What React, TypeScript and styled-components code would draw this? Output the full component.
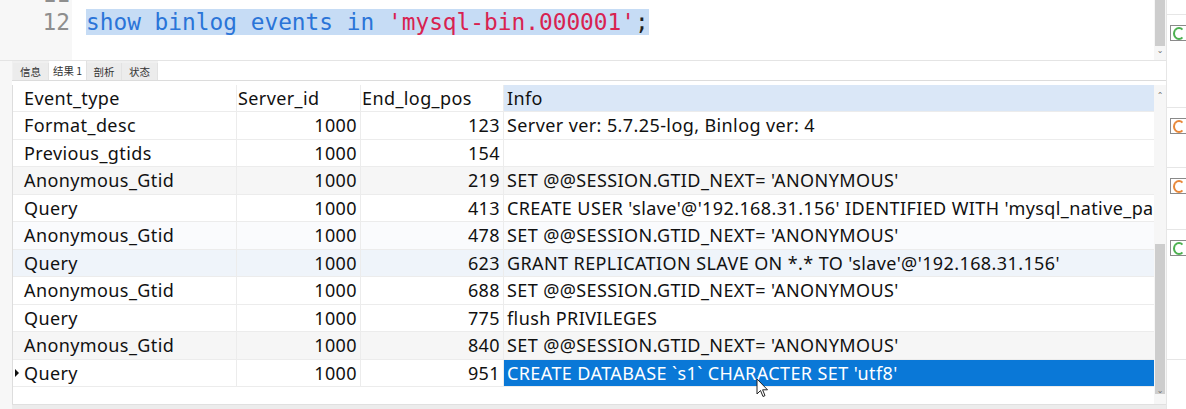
import React from "react";
import styled, { createGlobalStyle } from "styled-components";

const Global = createGlobalStyle`
  html, body { margin: 0; padding: 0; background: #ffffff; }
  body { width: 1186px; height: 409px; overflow: hidden; }
  * { box-sizing: border-box; }
`;

const Page = styled.div`
  width: 1186px;
  height: 409px;
  display: flex;
  overflow: hidden;
  position: relative;
  background: #ffffff;
`;

const Main = styled.div`
  width: 1167px;
  flex-shrink: 0;
  display: flex;
  flex-direction: column;
  border-right: 1px solid #e6e6e6;
`;

const Editor = styled.div`
  height: 61px;
  display: flex;
  border-bottom: 1px solid #e4e4e4;
  overflow: hidden;
`;

const Gutter = styled.div`
  width: 72px;
  background: #f7f7f7;
  display: flex;
  flex-direction: column;
  align-items: flex-end;
  padding-right: 2px;
  margin-top: -20px;
`;

const Code = styled.div`
  flex: 1;
  display: flex;
  flex-direction: column;
  padding-left: 14px;
  margin-top: -20px;
`;

const Line = styled.div`
  height: 28px;
  line-height: 28px;
  font-family: "DejaVu Sans Mono", monospace;
  font-size: 22.8px;
  white-space: pre;
  color: #222;
`;

const LineNo = styled(Line)`
  color: #8e8e8e;
`;

const Sel = styled.span`
  background: #c6dcf5;
`;

const Kw = styled.span`
  color: #2a74d8;
`;

const Str = styled.span`
  color: #d82250;
`;

const VScroll = styled.div<{ $thumbTop: number; $thumbH: number }>`
  width: 12px;
  position: relative;
  background: #f6f6f6;
  &::before {
    content: "";
    position: absolute;
    left: 1px;
    right: 1px;
    top: ${(p) => p.$thumbTop}px;
    height: ${(p) => p.$thumbH}px;
    background: #cdcdcd;
  }
`;

const Arrow = styled.span<{ $top?: number; $bottom?: number }>`
  position: absolute;
  left: 0;
  width: 12px;
  text-align: center;
  font-family: "DejaVu Sans", sans-serif;
  font-size: 8px;
  line-height: 10px;
  color: #707070;
  ${(p) => (p.$top !== undefined ? `top: ${p.$top}px;` : "")}
  ${(p) => (p.$bottom !== undefined ? `bottom: ${p.$bottom}px;` : "")}
`;

const Results = styled.div`
  flex: 1;
  display: flex;
  min-height: 0;
`;

const LeftMargin = styled.div`
  width: 12px;
  background: #f7f7f7;
`;

const ResultsBody = styled.div`
  flex: 1;
  display: flex;
  flex-direction: column;
  min-width: 0;
`;

const TabBar = styled.div`
  height: 20px;
  display: flex;
  align-items: stretch;
  border-bottom: 1px solid #dcdcdc;
  background: #ffffff;
`;

const TabStrip = styled.div`
  display: flex;
  background: #f0f0f0;
  padding-left: 1px;
  width: 146px;
`;

const Tab = styled.div<{ $active?: boolean; $w: number }>`
  width: ${(p) => p.$w}px;
  display: flex;
  align-items: center;
  justify-content: center;
  font-family: "Noto Sans CJK SC", "Noto Sans", sans-serif;
  font-size: 10.5px;
  color: #333;
  background: ${(p) => (p.$active ? "#ffffff" : "#ececec")};
  border-right: 1px solid #e2e2e2;
  margin-top: ${(p) => (p.$active ? "0" : "2px")};
`;

const GridWrap = styled.div`
  flex: 1;
  display: flex;
  min-height: 0;
  padding-top: 4px;
  position: relative;
`;

const Table = styled.div`
  flex: 1;
  min-width: 0;
  display: grid;
  grid-template-columns: 10px 214px 124px 143px 1fr;
  grid-auto-rows: 27.5px;
  grid-template-rows: 27px;
  align-content: start;
  border-left: 1px solid #dddddd;
  overflow: hidden;
`;

const Cell = styled.div<{ $right?: boolean; $bg?: string; $sel?: boolean }>`
  font-family: "Noto Sans", "Open Sans", sans-serif;
  font-size: 18px;
  letter-spacing: 0.4px;
  line-height: 27px;
  color: ${(p) => (p.$sel ? "#ffffff" : "#111111")};
  background: ${(p) => (p.$sel ? "#0a78d7" : p.$bg || "transparent")};
  white-space: nowrap;
  overflow: hidden;
  text-align: ${(p) => (p.$right ? "right" : "left")};
  padding: ${(p) => (p.$right ? "0 3px 0 0" : "0 0 0 1px")};
  border-right: 1px solid #ececec;
  border-bottom: 1px solid #ececec;
`;

const InfoCell = styled(Cell)`
  border-right: none;
  padding-left: 3px;
`;

const Indicator = styled.div<{ $bg?: string }>`
  background: ${(p) => p.$bg || "transparent"};
  border-bottom: 1px solid #ececec;
  display: flex;
  align-items: center;
  justify-content: center;
`;

const Tri = styled.span`
  width: 0;
  height: 0;
  border-top: 4px solid transparent;
  border-bottom: 4px solid transparent;
  border-left: 4px solid #111;
  margin-left: -2px;
`;

const HScroll = styled.div`
  height: 5px;
  background: #ececec;
  border-top: 1px solid #e0e0e0;
  margin-top: auto;
`;

const Side = styled.div`
  flex: 1;
  min-width: 0;
  display: flex;
  flex-direction: column;
  background: #ffffff;
  overflow: hidden;
`;

const SideSection = styled.div<{ $h: number }>`
  height: ${(p) => p.$h}px;
  border-bottom: 1px solid #e6e6e6;
  padding: 10px 0 0 3px;
`;

const SideIcon = styled.div<{ $c: string }>`
  width: 28px;
  height: 16px;
  border: 1px solid #8a8a8a;
  background: #fff;
  display: flex;
  align-items: center;
  padding-left: 2px;
  flex-shrink: 0;
  &::before {
    content: "";
    width: 8px;
    height: 9px;
    border: 2px solid ${(p) => p.$c};
    border-radius: 50%;
    border-right-color: transparent;
  }
`;

const Cursor = styled.svg`
  position: absolute;
  left: 756px;
  top: 378px;
`;

type Row = { t: string; s: string; p: string; i: string; bg?: string };

const rows: Row[] = [
  { t: "Format_desc", s: "1000", p: "123", i: "Server ver: 5.7.25-log, Binlog ver: 4" },
  { t: "Previous_gtids", s: "1000", p: "154", i: "" },
  { t: "Anonymous_Gtid", s: "1000", p: "219", i: "SET @@SESSION.GTID_NEXT= 'ANONYMOUS'", bg: "#f6f6f6" },
  { t: "Query", s: "1000", p: "413", i: "CREATE USER 'slave'@'192.168.31.156' IDENTIFIED WITH 'mysql_native_password'" },
  { t: "Anonymous_Gtid", s: "1000", p: "478", i: "SET @@SESSION.GTID_NEXT= 'ANONYMOUS'", bg: "#fafbfd" },
  { t: "Query", s: "1000", p: "623", i: "GRANT REPLICATION SLAVE ON *.* TO 'slave'@'192.168.31.156'", bg: "#eff4fa" },
  { t: "Anonymous_Gtid", s: "1000", p: "688", i: "SET @@SESSION.GTID_NEXT= 'ANONYMOUS'" },
  { t: "Query", s: "1000", p: "775", i: "flush PRIVILEGES" },
  { t: "Anonymous_Gtid", s: "1000", p: "840", i: "SET @@SESSION.GTID_NEXT= 'ANONYMOUS'", bg: "#f6f6f6" },
  { t: "Query", s: "1000", p: "951", i: "CREATE DATABASE `s1` CHARACTER SET 'utf8'" },
];

export default function App() {
  return (
    <Page>
      <Global />
      <Main>
        <Editor>
          <Gutter>
            <LineNo>11</LineNo>
            <LineNo>12</LineNo>
          </Gutter>
          <Code>
            <Line> </Line>
            <Line>
              <Sel>
                <Kw>show binlog events in </Kw>
                <Str>'mysql-bin.000001'</Str>;
              </Sel>
            </Line>
          </Code>
          <VScroll $thumbTop={0} $thumbH={46}>
            <Arrow $bottom={4}>&#8964;</Arrow>
          </VScroll>
        </Editor>
        <Results>
          <LeftMargin />
          <ResultsBody>
            <TabBar>
              <TabStrip>
                <Tab $w={36}>信息</Tab>
                <Tab $w={38} $active>结果 1</Tab>
                <Tab $w={35}>剖析</Tab>
                <Tab $w={36}>状态</Tab>
              </TabStrip>
            </TabBar>
            <GridWrap>
              <Table>
                <Indicator />
                <Cell>Event_type</Cell>
                <Cell>Server_id</Cell>
                <Cell>End_log_pos</Cell>
                <InfoCell $bg="#dae7f7">Info</InfoCell>
                {rows.map((r, idx) => {
                  const last = idx === rows.length - 1;
                  return (
                    <React.Fragment key={idx}>
                      <Indicator $bg={r.bg}>{last ? <Tri /> : null}</Indicator>
                      <Cell $bg={r.bg}>{r.t}</Cell>
                      <Cell $bg={r.bg} $right>{r.s}</Cell>
                      <Cell $bg={r.bg} $right>{r.p}</Cell>
                      <InfoCell $bg={r.bg} $sel={last}>{r.i}</InfoCell>
                    </React.Fragment>
                  );
                })}
              </Table>
              <VScroll $thumbTop={159} $thumbH={150}>
                <Arrow $top={6}>&#8963;</Arrow>
                <Arrow $bottom={8}>&#8964;</Arrow>
              </VScroll>
            </GridWrap>
            <HScroll />
          </ResultsBody>
        </Results>
      </Main>
      <Side>
        <SideSection $h={15} />
        <SideSection $h={93}>
          <SideIcon $c="#4cb050" />
        </SideSection>
        <SideSection $h={60}>
          <SideIcon $c="#e8883a" />
        </SideSection>
        <SideSection $h={62}>
          <SideIcon $c="#e8883a" />
        </SideSection>
        <SideSection $h={130}>
          <SideIcon $c="#4cb050" />
        </SideSection>
      </Side>
      <Cursor width="13" height="20" viewBox="0 0 13 20">
        <path d="M1 1 L1 16 L4.5 12.5 L7 18.5 L9 17.6 L6.6 11.8 L11.5 11.8 Z" fill="#ffffff" stroke="#222" strokeWidth="1" strokeLinejoin="round" />
      </Cursor>
    </Page>
  );
}
